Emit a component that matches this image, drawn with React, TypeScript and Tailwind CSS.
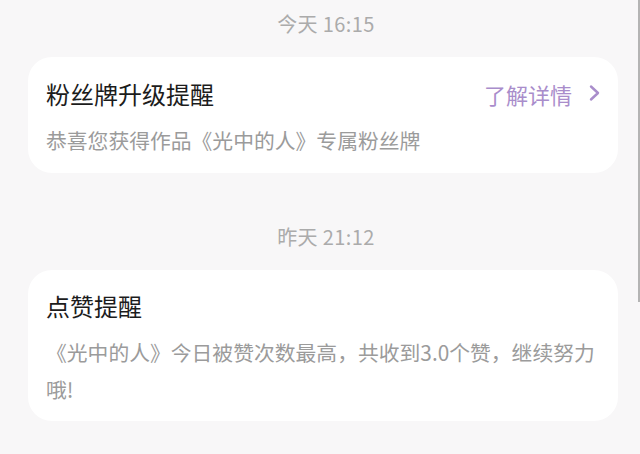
import React from "react";

export default function App() {
  const font = { fontFamily: '"Noto Sans CJK SC", "Noto Sans", sans-serif' };
  return (
    <div className="relative w-[640px] h-[454px] overflow-hidden bg-[#f8f7f8]" style={font}>
      <div className="px-[28px] pr-[22px]">
        <div className="h-[57px] pt-[10px] flex justify-center">
          <span className="text-[20px] leading-[28px] tracking-[0.4px] text-[#ababab] pl-[6px]">今天 16:15</span>
        </div>
        <div className="bg-white rounded-[24px] pl-[18px] pr-[17px] pt-[21px] pb-[19px]">
          <div className="flex items-center justify-between h-[32px]">
            <span className="text-[24px] leading-[32px] text-[#1c1c1c]">粉丝牌升级提醒</span>
            <div className="flex items-center gap-[16px]">
              <span className="text-[22px] leading-[32px] text-[#a98dcb]">了解详情</span>
              <svg width="13" height="18" viewBox="0 0 13 18" className="mt-[-3px]">
                <polyline points="3,2.5 10,9 3,15.5" fill="none" stroke="#a98dcb" strokeWidth="2.4" strokeLinecap="round" strokeLinejoin="round" />
              </svg>
            </div>
          </div>
          <div className="mt-[16px] text-[20.8px] leading-[28px] text-[#9b9b9b]">
            恭喜您获得作品《光中的人》专属粉丝牌
          </div>
        </div>
        <div className="h-[97px] pt-[50px] flex justify-center">
          <span className="text-[20px] leading-[28px] tracking-[0.4px] text-[#ababab] pl-[6px]">昨天 21:12</span>
        </div>
        <div className="bg-white rounded-[24px] pl-[18px] pr-[18px] pt-[20px] pb-[13px]">
          <div className="text-[24px] leading-[32px] text-[#1c1c1c]">点赞提醒</div>
          <div className="mt-[12px] text-[20.8px] leading-[37px] text-[#9b9b9b]">
            《光中的人》今日被赞次数最高，共收到3.0个赞，继续努力哦!
          </div>
        </div>
      </div>
      <div className="absolute right-0 top-0 w-[2px] h-[302px] bg-[#b4b4b4]" />
    </div>
  );
}
